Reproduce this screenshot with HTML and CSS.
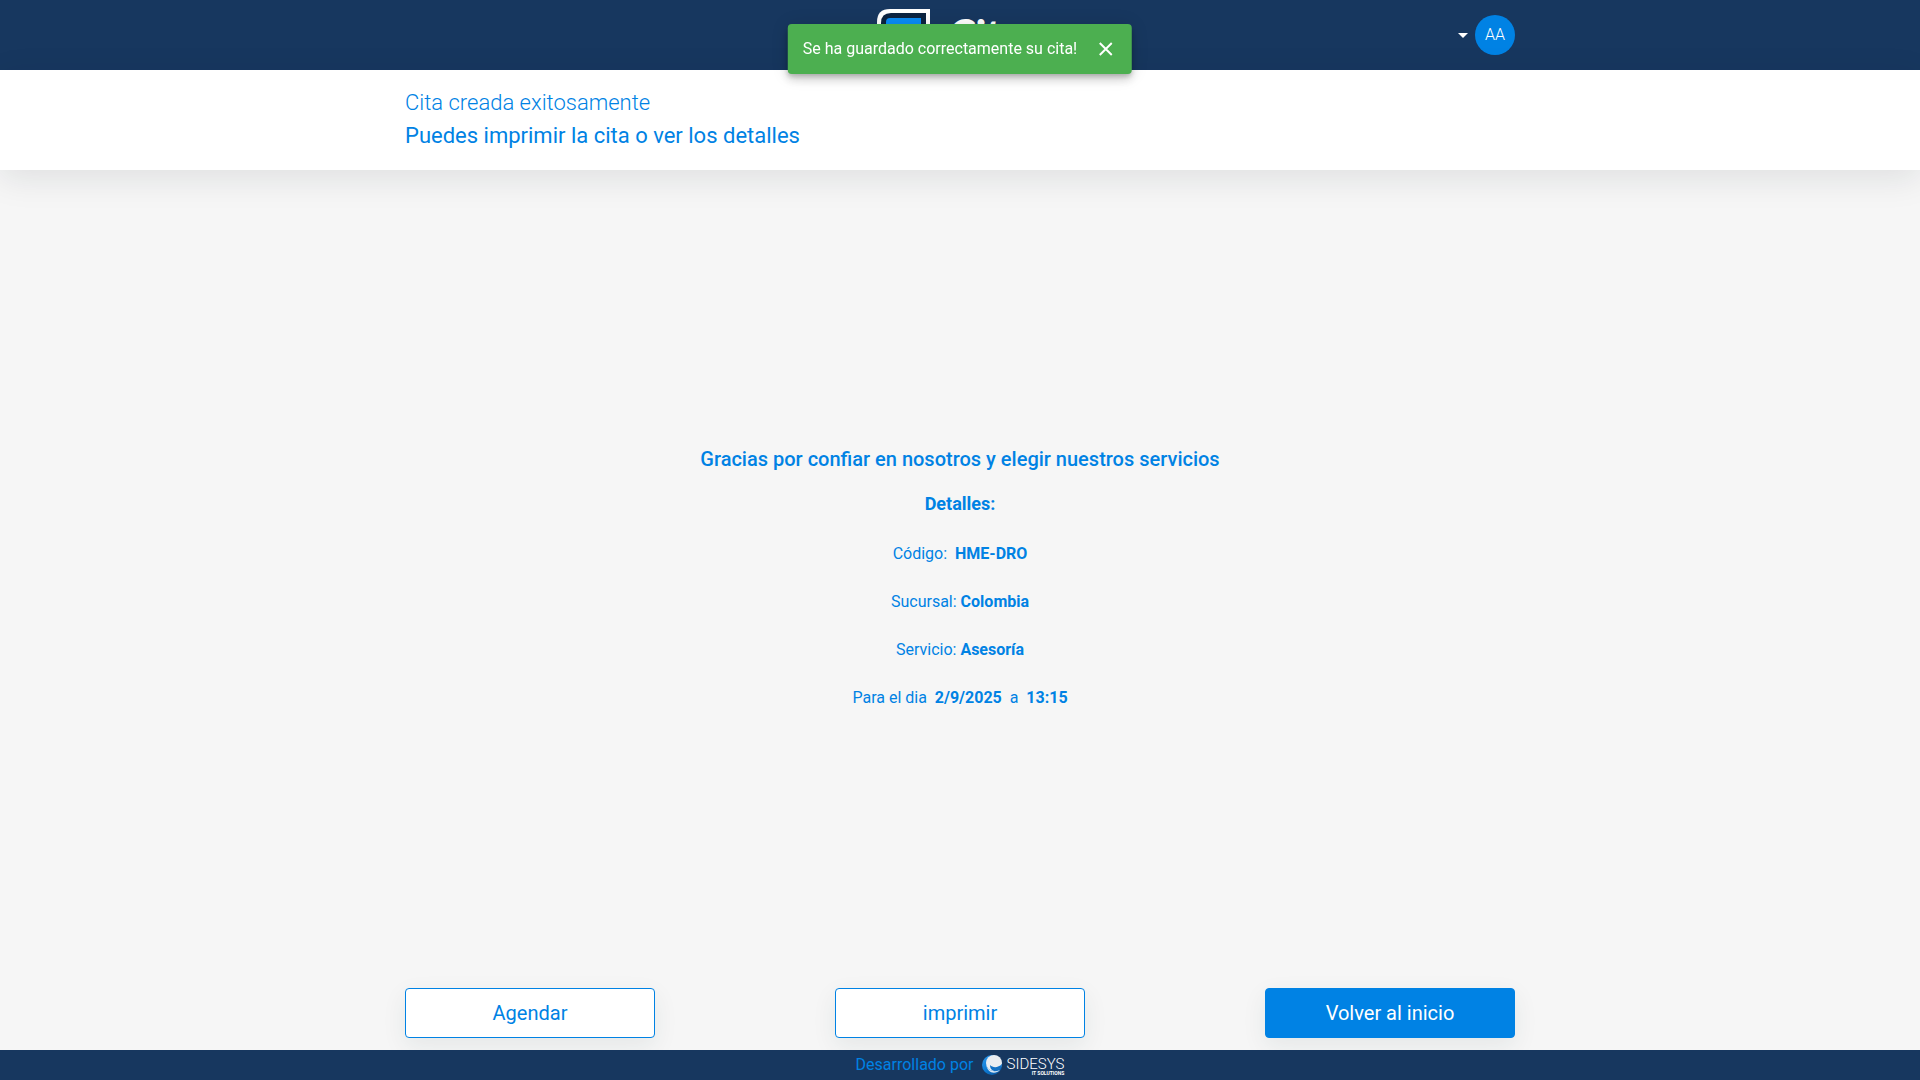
FILE: index.html
```html
<!DOCTYPE html>
<html lang="es">
<head>
  <meta charset="utf-8">
  <meta name="viewport" content="width=device-width, initial-scale=1">
  <title>Cita creada exitosamente</title>
  <link rel="stylesheet" href="styles.css">
</head>
<body>
  <header class="topbar">
    <div class="container topbar-row">
      <a class="brand" href="#">
        <svg class="brand-mark" viewBox="0 0 53 52" aria-hidden="true">
          <path d="M13 0H53V39Q53 52 40 52H0V13Q0 0 13 0Z" fill="#fff"/>
          <path d="M14 4H49V38Q49 48 39 48H4V14Q4 4 14 4Z" fill="#0b2340"/>
          <path d="M13 9H44V38Q44 43 39 43H9V13Q9 9 13 9Z" fill="#0a8cf5"/>
        </svg>
        <span class="brand-name">Citas</span>
      </a>
      <button class="account" type="button" aria-label="Cuenta">
        <span class="caret"></span>
        <span class="avatar">AA</span>
      </button>
    </div>
  </header>

  <section class="heading">
    <div class="container">
      <h1 class="heading-title">Cita creada exitosamente</h1>
      <h2 class="heading-subtitle">Puedes imprimir la cita o ver los detalles</h2>
    </div>
  </section>

  <main class="container content">
    <div class="summary">
      <p class="thanks">Gracias por confiar en nosotros y elegir nuestros servicios</p>
      <h3 class="details-title">Detalles:</h3>
      <p class="detail">Código: &nbsp;<strong>HME-DRO</strong></p>
      <p class="detail">Sucursal: <strong>Colombia</strong></p>
      <p class="detail">Servicio: <strong>Asesoría</strong></p>
      <p class="detail">Para el dia &nbsp;<strong>2/9/2025</strong>&nbsp; a &nbsp;<strong>13:15</strong></p>
    </div>
    <div class="actions">
      <button class="btn" type="button">Agendar</button>
      <button class="btn" type="button">imprimir</button>
      <button class="btn btn-primary" type="button">Volver al inicio</button>
    </div>
  </main>

  <footer class="footer">
    <span class="footer-text">Desarrollado por</span>
    <a class="maker" href="#">
      <svg class="maker-mark" viewBox="0 0 20 20" aria-hidden="true">
        <defs>
          <linearGradient id="ball" x1="0" y1="0" x2="1" y2="1">
            <stop offset="0" stop-color="#2f9cf0"/>
            <stop offset=".5" stop-color="#0d78d0"/>
            <stop offset="1" stop-color="#0a4f96"/>
          </linearGradient>
        </defs>
        <circle cx="10" cy="10" r="10" fill="url(#ball)"/>
        <circle cx="12" cy="8" r="8" fill="#e9edf1"/>
        <path d="M8 10C11 13 16 13 20 9C20 14 16 17 12 16C9 15 8 13 8 10Z" fill="#1170c4"/>
        <path d="M4 9C5 15 11 18 18 15C13 20 5 18 4 9Z" fill="#dbe9f5"/>
      </svg>
      <span class="maker-name">
        <span class="maker-title">SIDESYS</span>
        <span class="maker-tag">IT SOLUTIONS</span>
      </span>
    </a>
  </footer>

  <div class="toast" role="status">
    <span>Se ha guardado correctamente su cita!</span>
    <button class="toast-close" type="button" aria-label="Cerrar">
      <svg viewBox="0 0 14 14" width="14" height="14" aria-hidden="true">
        <path d="M1 1L13 13M13 1L1 13" stroke="#fff" stroke-width="2"/>
      </svg>
    </button>
  </div>
</body>
</html>
```
FILE: styles.css
```css
:root {
  --navy: #17375f;
  --blue: #0082e4;
  --page: #f6f6f6;
}

* {
  box-sizing: border-box;
}

body {
  margin: 0;
  min-height: 100vh;
  display: flex;
  flex-direction: column;
  background: var(--page);
  color: var(--blue);
  font-family: Roboto, "Liberation Sans", sans-serif;
  font-size: 16px;
}

h1, h2, h3, p {
  margin: 0;
}

button {
  font: inherit;
  cursor: pointer;
}

a {
  color: inherit;
  text-decoration: none;
}

.container {
  width: 100%;
  max-width: 1140px;
  margin: 0 auto;
  padding: 0 15px;
}

.topbar {
  background: var(--navy);
}

.topbar-row {
  height: 70px;
  display: grid;
  grid-template-columns: 1fr auto 1fr;
  align-items: center;
}

.brand {
  grid-column: 2;
  display: flex;
  align-items: center;
  gap: 18px;
  color: #fff;
}

.brand-mark {
  width: 53px;
  height: 52px;
}

.brand-name {
  padding-bottom: 2px;
  padding-right: 4px;
  font: italic 900 42px/44px Lato, sans-serif;
}

.account {
  justify-self: end;
  display: flex;
  align-items: center;
  gap: 7px;
  padding: 0;
  border: 0;
  background: none;
  color: #fff;
}

.caret {
  border: 5px solid transparent;
  border-top-color: #fff;
  border-bottom: 0;
}

.avatar {
  width: 40px;
  height: 40px;
  border-radius: 50%;
  background: var(--blue);
  font-size: 16px;
  font-weight: 300;
  line-height: 40px;
  text-align: center;
}

.heading {
  padding: 16px 0 18px;
  background: #fff;
  box-shadow: 0 8px 32px rgba(20, 30, 40, 0.1);
}

.heading-title,
.heading-subtitle {
  font-size: 22px;
  line-height: 33px;
}

.heading-title {
  font-weight: 300;
}

.heading-subtitle {
  font-weight: 400;
}

.content {
  flex: 1;
  display: flex;
  flex-direction: column;
}

.summary {
  flex: 1;
  display: flex;
  flex-direction: column;
  justify-content: center;
  align-items: center;
  padding-top: 20px;
}

.thanks {
  font-size: 20px;
  font-weight: 500;
  line-height: 30px;
  margin-bottom: 16px;
}

.details-title {
  font-size: 18px;
  font-weight: 700;
  line-height: 28px;
  margin-bottom: 24px;
}

.detail {
  font-weight: 400;
  line-height: 24px;
  margin-bottom: 24px;
}

.detail strong {
  font-weight: 700;
}

.actions {
  display: flex;
  justify-content: space-between;
  gap: 16px;
  padding-bottom: 12px;
}

.btn {
  width: 250px;
  height: 50px;
  border: 1px solid var(--blue);
  border-radius: 4px;
  background: #fff;
  color: var(--blue);
  font-size: 20px;
  box-shadow: 0 8px 24px rgba(20, 60, 60, 0.08);
}

.btn-primary {
  background: var(--blue);
  color: #fff;
}

.footer {
  position: relative;
  height: 30px;
  display: flex;
  justify-content: center;
  align-items: center;
  gap: 9px;
  background: var(--navy);
}

.footer-text {
  line-height: 20px;
}

.maker {
  display: flex;
  align-items: center;
  gap: 4px;
  color: #fff;
}

.maker-mark {
  width: 20px;
  height: 20px;
}

.maker-name {
  display: flex;
  flex-direction: column;
  align-items: flex-end;
  padding-top: 2px;
}

.maker-title {
  font-size: 15px;
  font-weight: 300;
  line-height: 14px;
}

.maker-tag {
  font-size: 5px;
  font-weight: 700;
  line-height: 5px;
}

.toast {
  position: fixed;
  top: 24px;
  left: 50%;
  transform: translateX(-50%);
  height: 50px;
  display: flex;
  align-items: center;
  gap: 22px;
  padding: 0 19px 0 15px;
  border-radius: 4px;
  background: #4caf50;
  color: #fff;
  line-height: 20px;
  white-space: nowrap;
  box-shadow: 0 3px 5px -1px rgba(0, 0, 0, 0.2), 0 6px 10px rgba(0, 0, 0, 0.14), 0 1px 18px rgba(0, 0, 0, 0.12);
}

.toast-close {
  display: flex;
  padding: 0;
  border: 0;
  background: none;
}
```
